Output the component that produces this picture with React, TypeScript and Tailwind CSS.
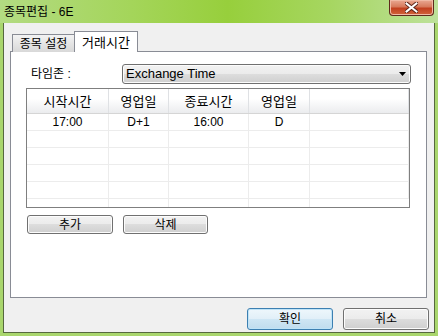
const font = "font-['Liberation_Sans','Noto_Sans_CJK_KR',sans-serif]";

const columns = [
  { label: "시작시간", width: "w-[82px]" },
  { label: "영업일", width: "w-[60px]" },
  { label: "종료시간", width: "w-[80px]" },
  { label: "영업일", width: "w-[61px]" },
];

const rows = [
  ["17:00", "D+1", "16:00", "D"],
  ["", "", "", ""],
  ["", "", "", ""],
  ["", "", "", ""],
  ["", "", "", ""],
];

function Win7Button({ label, primary = false, className = "" }: { label: string; primary?: boolean; className?: string }) {
  return (
    <button
      className={`flex items-center justify-center rounded-[3px] border text-[12px] text-black ${
        primary
          ? "border-[#3c7fb1] bg-[linear-gradient(#eef7fc_0%,#e1eff8_50%,#cfe6f4_50%,#c0dcee_100%)] shadow-[inset_0_0_0_1px_#bfe3f7]"
          : "border-[#707070] bg-[linear-gradient(#f2f2f2_0%,#ebebeb_50%,#dddddd_50%,#cfcfcf_100%)] shadow-[inset_0_0_0_1px_#fcfcfc]"
      } ${className}`}
    >
      {label}
    </button>
  );
}

export default function App() {
  return (
    <div className={`relative flex h-[336px] w-[438px] flex-col bg-[#a9d66d] ${font}`}>
      {/* title bar */}
      <div className="flex h-[23px] items-center bg-[linear-gradient(90deg,#b3db82_0%,#a4d55a_30%,#97cf3c_52%,#a6d660_75%,#bde19a_100%)] pl-[4px] text-[12px] text-black">
        종목편집 - 6E
      </div>
      <div className="absolute right-[4px] top-0 flex h-[16px] w-[45px] items-center justify-center rounded-b-[4px] border border-t-0 border-[#5e2a1c] bg-[linear-gradient(#e9a892_0%,#d77a5c_45%,#c2401f_55%,#d0633b_100%)] shadow-[inset_0_0_0_1px_#f0b9a4]">
        <svg width="13" height="11" viewBox="0 0 13 11">
          <path d="M1.5 1.5 L11.5 9.5 M11.5 1.5 L1.5 9.5" stroke="#5b2418" strokeWidth="4" strokeLinecap="square" />
          <path d="M1.5 1.5 L11.5 9.5 M11.5 1.5 L1.5 9.5" stroke="#ffffff" strokeWidth="2" strokeLinecap="square" />
        </svg>
      </div>

      {/* client area */}
      <div className="mx-[3px] mb-[3px] flex flex-1 flex-col border-x border-b border-[#56683f] bg-[#f0f0f0]">
        <div className="pl-[6px] pr-[7px] pt-[8px]">
          {/* tabs */}
          <div className="relative z-10 -mb-px flex h-[21px] items-end pl-[2px]">
            <div className="flex h-[18px] w-[63px] items-center justify-center border border-b-0 border-[#898c95] bg-[linear-gradient(#f3f3f3,#e5e5e5_50%,#d8d8d8)] text-[12px] text-black">
              종목 설정
            </div>
            <div className="-ml-px flex h-[21px] w-[64px] items-start justify-center border border-b-0 border-[#898c95] bg-white pt-[1px] text-[13px] text-black">
              거래시간
            </div>
          </div>

          {/* panel */}
          <div className="flex h-[247px] flex-col border border-[#898c95] bg-white">
            <div className="mt-[12px] flex h-[20px] items-center">
              <span className="w-[111px] pl-[20px] text-[12px] text-black">타임존 :</span>
              <div className="flex h-[20px] w-[289px] items-center justify-between rounded-[3px] border border-[#707070] bg-[linear-gradient(#f2f2f2_0%,#ebebeb_50%,#dddddd_50%,#cfcfcf_100%)] pl-[3px] pr-[4px] shadow-[inset_0_0_0_1px_#fcfcfc]">
                <span className="text-[13px] text-black">Exchange Time</span>
                <svg width="7" height="4" viewBox="0 0 7 4">
                  <path d="M0 0 H7 L3.5 4 Z" fill="#000" />
                </svg>
              </div>
            </div>

            {/* grid */}
            <div className="ml-[15px] mt-[4px] h-[120px] w-[384px] overflow-hidden border border-[#7f7f7f] bg-white">
              <div className="flex h-[25px] border-b border-[#d5d5d5] bg-[linear-gradient(#ffffff_0%,#ffffff_40%,#ebecee_100%)]">
                {columns.map((c, i) => (
                  <div key={i} className={`${c.width} flex shrink-0 items-center justify-center border-r border-[#dfe1e4] pt-[1px] text-[13px] text-black`}>
                    {c.label}
                  </div>
                ))}
                <div className="flex-1 border-r border-[#dfe1e4]" />
              </div>
              {rows.map((r, ri) => (
                <div key={ri} className="flex h-[17px] border-b border-[#ececec]">
                  {r.map((v, ci) => (
                    <div key={ci} className={`${columns[ci].width} flex shrink-0 items-center justify-center border-r border-[#ececec] text-[12px] text-black`}>
                      {v}
                    </div>
                  ))}
                  <div className="flex-1 border-r border-[#ececec]" />
                </div>
              ))}
              <div className="flex h-[17px]">
                {columns.map((c, i) => (
                  <div key={i} className={`${c.width} shrink-0 border-r border-[#ececec]`} />
                ))}
              </div>
            </div>

            <div className="ml-[16px] mt-[7px] flex gap-[10px]">
              <Win7Button label="추가" className="h-[19px] w-[86px]" />
              <Win7Button label="삭제" className="h-[19px] w-[85px]" />
            </div>
          </div>
        </div>

        <div className="mt-[10px] flex justify-end gap-[10px] pr-[5px]">
          <Win7Button label="확인" primary className="h-[22px] w-[86px]" />
          <Win7Button label="취소" className="h-[22px] w-[86px]" />
        </div>
      </div>
    </div>
  );
}
